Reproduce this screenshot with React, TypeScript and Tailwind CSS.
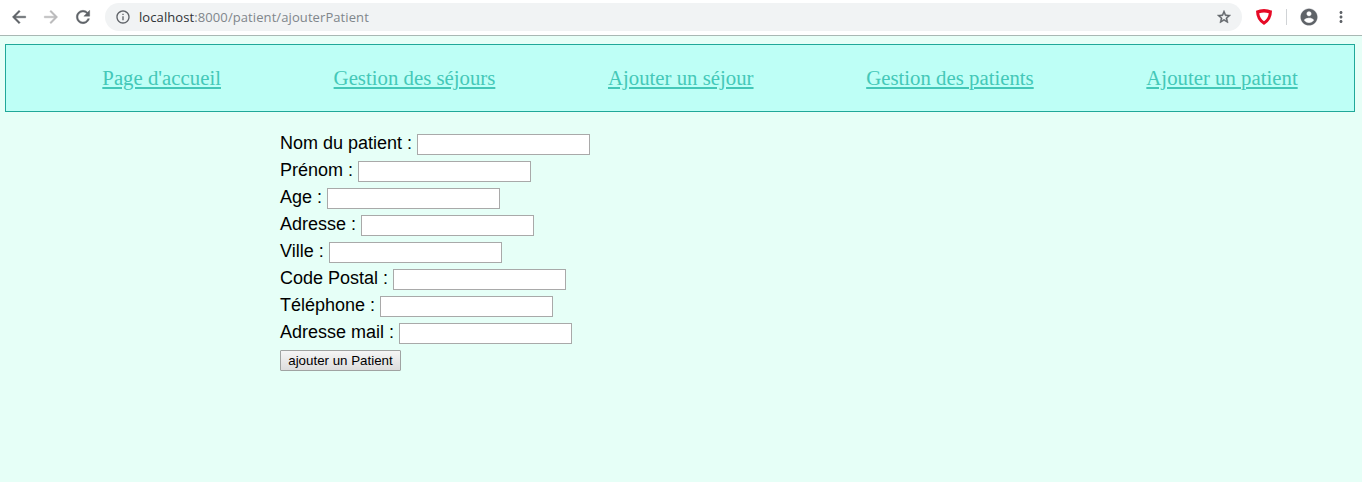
const links = [
  "Page d'accueil",
  'Gestion des séjours',
  'Ajouter un séjour',
  'Gestion des patients',
  'Ajouter un patient',
];

const fields = [
  'Nom du patient :',
  'Prénom :',
  'Age :',
  'Adresse :',
  'Ville :',
  'Code Postal :',
  'Téléphone :',
  'Adresse mail :',
];

function Icon({ d, className }: { d: string; className: string }) {
  return (
    <svg viewBox="0 0 24 24" fill="currentColor" className={`block shrink-0 ${className}`} aria-hidden="true">
      <path d={d} />
    </svg>
  );
}

function BrowserBar() {
  return (
    <header className="flex h-9 items-start border-b border-[#a9b8b4] bg-white pt-[3px]">
      <div className="flex h-7 w-[105px] shrink-0 items-center gap-3 pl-[9px] text-[#5f6368]">
        <Icon className="size-5 stroke-current stroke-[0.5]" d="M20 11H7.83l5.59-5.59L12 4l-8 8 8 8 1.41-1.41L7.83 13H20v-2z" />
        <Icon className="size-5 stroke-current stroke-[0.5] text-[#bababc]" d="M12 4l-1.41 1.41L16.17 11H4v2h12.17l-5.58 5.59L12 20l8-8z" />
        <Icon
          className="size-5 stroke-current stroke-[0.5]"
          d="M17.65 6.35C16.2 4.9 14.21 4 12 4c-4.42 0-7.99 3.58-7.99 8s3.57 8 7.99 8c3.73 0 6.84-2.55 7.73-6h-2.08c-.82 2.33-3.04 4-5.65 4-3.31 0-6-2.69-6-6s2.69-6 6-6c1.66 0 3.14.69 4.22 1.78L13 11h7V4l-2.35 2.35z"
        />
      </div>
      <div className="flex h-7 w-[1137px] shrink-0 items-center rounded-full bg-[#f1f3f4] pr-[10px] pl-[10px] text-[#5f6368]">
        <Icon
          className="size-4"
          d="M11 17h2v-6h-2v6zm1-15C6.48 2 2 6.48 2 12s4.48 10 10 10 10-4.48 10-10S17.52 2 12 2zm0 18c-4.41 0-8-3.59-8-8s3.59-8 8-8 8 3.59 8 8-3.59 8-8 8zM11 9h2V7h-2v2z"
        />
        <span className="ml-2 flex-1 font-['Open_Sans',sans-serif] text-[13px] leading-5 tracking-[0.09px] whitespace-nowrap text-[#80868b]">
          <span className="text-[#303236]">localhost</span>:8000/patient/ajouterPatient
        </span>
        <Icon
          className="size-4 stroke-current stroke-[0.7]"
          d="M22 9.24l-7.19-.62L12 2 9.19 8.63 2 9.24l5.46 4.73L5.82 21 12 17.27 18.18 21l-1.63-7.03L22 9.24zM12 15.4l-3.76 2.27 1-4.28-3.32-2.88 4.38-.38L12 6.1l1.71 4.04 4.38.38-3.32 2.88 1 4.28L12 15.4z"
        />
      </div>
      <div className="flex h-7 flex-1 items-center text-[#5f6368]">
        <svg viewBox="0 0 16 16" className="ml-[14px] block size-4" aria-hidden="true">
          <path
            d="M0 1.8Q8 -1.8 16 1.8Q16 11.5 8 16Q0 11.5 0 1.8ZM3.2 4.2Q4 9.6 8 12.2Q12 9.6 12.8 4.2Q8 2.8 3.2 4.2Z"
            fill="#e60a26"
            fillRule="evenodd"
          />
        </svg>
        <span className="ml-[14px] h-4 w-px bg-[#d0d3d6]" />
        <Icon
          className="ml-3 size-5 stroke-current stroke-[0.3]"
          d="M12 2C6.48 2 2 6.48 2 12s4.48 10 10 10 10-4.48 10-10S17.52 2 12 2zm0 3c1.66 0 3 1.34 3 3s-1.34 3-3 3-3-1.34-3-3 1.34-3 3-3zm0 14.2c-2.5 0-4.71-1.28-6-3.22.03-1.99 4-3.08 6-3.08 1.99 0 5.97 1.09 6 3.08-1.29 1.94-3.5 3.22-6 3.22z"
        />
        <Icon
          className="ml-[13px] size-[18px]"
          d="M12 8c1.1 0 2-.9 2-2s-.9-2-2-2-2 .9-2 2 .9 2 2 2zm0 2c-1.1 0-2 .9-2 2s.9 2 2 2 2-.9 2-2-.9-2-2-2zm0 6c-1.1 0-2 .9-2 2s.9 2 2 2 2-.9 2-2-.9-2-2-2z"
        />
      </div>
    </header>
  );
}

export default function App() {
  return (
    <div className="h-[482px] overflow-hidden bg-[#e6fff7] text-black">
      <BrowserBar />
      <nav className="mt-2 mr-[7px] ml-[5px] h-[68px] border border-[#20a899] bg-[#befff6]">
        <ul className="flex h-full items-center justify-around pl-10 font-['Liberation_Serif',serif] text-[20.8px] leading-6">
          {links.map((label) => (
            <li key={label}>
              <a href="#" className="text-[#44c8b8] underline decoration-2 underline-offset-2">
                {label}
              </a>
            </li>
          ))}
        </ul>
      </nav>
      <form className="mt-[18px] ml-[280px] font-['Liberation_Sans',sans-serif] text-[18px]">
        {fields.map((label) => (
          <label key={label} className="flex h-[27px] items-start leading-[27px]">
            <span className="mr-[5px]">{label}</span>
            <input type="text" className="mt-1 h-[21px] w-[173px] border border-[#a9a9a9] bg-white px-1 text-[13px] outline-none" />
          </label>
        ))}
        <button
          type="button"
          className="mt-1 block h-[21px] w-[121px] rounded-[1px] border border-[#a0a3a2] bg-linear-to-b from-[#f5f5f5] to-[#dddddd] text-[13.333px] leading-[19px] whitespace-nowrap"
        >
          ajouter un Patient
        </button>
      </form>
    </div>
  );
}
